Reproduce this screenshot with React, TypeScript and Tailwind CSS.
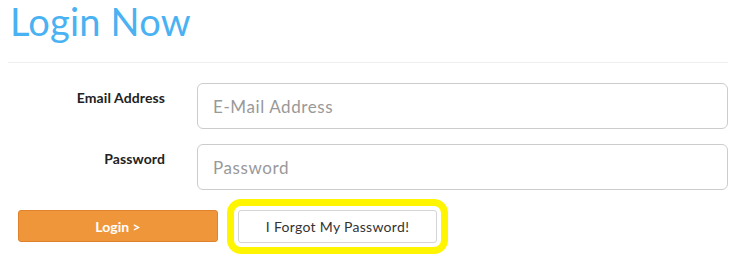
import React from "react";

export default function App() {
  return (
    <div className="w-[746px] h-[259px] bg-white overflow-hidden font-['Lato','Open_Sans',sans-serif] text-[#333]">
      <div className="ml-[8px] w-[720px] pt-[2px]">
        <h1 className="h-[42px] leading-[38px] pl-[2px] text-[38px] font-normal tracking-[0.2px] text-[#4ab2f2]">Login Now</h1>
        <div className="mt-[18px] border-t border-[#eeeeee]" />
        <form className="mt-[20px] flex flex-col gap-[15px]" onSubmit={(e) => e.preventDefault()}>
          <div className="flex items-start gap-[32px]">
            <label className="w-[157px] pt-[5px] text-right text-[14px] leading-[20px] font-bold tracking-[0.1px] text-[#222]">Email Address</label>
            <input
              type="email"
              placeholder="E-Mail Address"
              className="flex-1 h-[46px] rounded-[6px] border border-[#cccccc] bg-white px-[15px] text-[17px] tracking-[0.6px] text-[#555] placeholder:text-[#999] outline-none"
            />
          </div>
          <div className="flex items-start gap-[32px]">
            <label className="w-[157px] pt-[5px] text-right text-[14px] leading-[20px] font-bold tracking-[0.1px] text-[#222]">Password</label>
            <input
              type="password"
              placeholder="Password"
              className="flex-1 h-[46px] rounded-[6px] border border-[#cccccc] bg-white px-[15px] text-[17px] tracking-[0.6px] text-[#555] placeholder:text-[#999] outline-none"
            />
          </div>
          <div className="mt-[5px] ml-[10px] flex items-start gap-[20px]">
            <button
              type="submit"
              className="w-[200px] h-[32px] rounded-[3px] border border-[#e0822c] bg-[#f0963a] text-[14px] font-bold text-white"
            >
              Login &gt;
            </button>
            <button
              type="button"
              className="w-[199px] h-[33px] rounded-[3px] border border-[#d5d5d5] bg-white text-[14px] tracking-[0.3px] text-[#333] outline-[7px] outline-solid outline-[#fff500] outline-offset-[4px]"
            >
              I Forgot My Password!
            </button>
          </div>
        </form>
      </div>
    </div>
  );
}
